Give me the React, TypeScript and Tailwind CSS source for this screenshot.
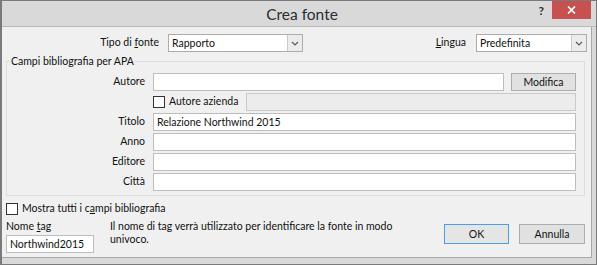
import React from "react";

const font = "font-['Lato',sans-serif]";

function Chevron() {
  return (
    <svg width="8" height="5" viewBox="0 0 8 5" className="block">
      <path d="M1 1 L4 4 L7 1" fill="none" stroke="#5a5a5a" strokeWidth="1.2" />
    </svg>
  );
}

function Select({ value, width }: { value: string; width: string }) {
  return (
    <div className={`${width} h-[18px] flex border border-[#acacac] bg-white`}>
      <div className="flex-1 pl-[3px] leading-[16px] text-[#111111]">{value}</div>
      <div className="w-[15px] border-l border-[#c8c8c8] bg-[#ececec] flex items-center justify-center">
        <Chevron />
      </div>
    </div>
  );
}

function Input({ value = "", className = "" }: { value?: string; className?: string }) {
  return (
    <div className={`h-[18px] border border-[#bdbdbd] bg-white pl-[3px] leading-[16px] text-[#111111] whitespace-nowrap ${className}`}>
      {value}
    </div>
  );
}

function Checkbox() {
  return <div className="w-[12px] h-[12px] border border-[#333333] bg-white shrink-0" />;
}

function Row({ label, children }: { label: string; children: React.ReactNode }) {
  return (
    <div className="flex items-center h-[18px]">
      <div className="w-[138px] text-right">{label}</div>
      <div className="flex-1 flex items-center ml-[8px]">{children}</div>
    </div>
  );
}

export default function App() {
  return (
    <div
      className={`${font} text-[10.5px] w-[597px] h-[265px] flex flex-col border-t border-r border-b border-l-2 border-[#7a7a7a] bg-[#d9d9d9] text-[#111111]`}
    >
      {/* Title bar */}
      <div className="h-[26px] shrink-0 flex items-center relative border-b border-[#b9b9b9] bg-[#d9d9d9]">
        <div className="flex-1 text-center text-[15.5px] text-[#2d2d2d] leading-[26px] pl-[6px]">Crea fonte</div>
        <div className="absolute right-[52px] top-[3px] text-[12px] leading-[14px] font-bold text-[#333]">?</div>
        <div className="absolute right-[5px] top-0 w-[39px] h-[18px] bg-[#c75050] flex items-center justify-center">
          <svg width="9" height="8" viewBox="0 0 9 8">
            <path d="M1 0.5 L8 7.5 M8 0.5 L1 7.5" stroke="white" strokeWidth="1.7" />
          </svg>
        </div>
      </div>

      {/* Body frame */}
      <div className="flex-1 flex flex-col pr-[4px] pb-[6px]">
        <div className="flex-1 flex flex-col bg-[#f0f0f0] border-r border-b border-[#a8a8a8]">
          {/* Row 1 */}
          <div className="mt-[7px] h-[18px] flex items-center">
            <div className="w-[157px] text-right">
              Tipo di <span className="underline">f</span>onte
            </div>
            <div className="ml-[9px]">
              <Select value="Rapporto" width="w-[135px]" />
            </div>
            <div className="ml-auto flex items-center mr-[4px]">
              <div>
                <span className="underline">L</span>ingua
              </div>
              <div className="ml-[10px]">
                <Select value="Predefinita" width="w-[111px]" />
              </div>
            </div>
          </div>

          {/* Group */}
          <fieldset className="mt-[2px] ml-[4px] mr-[6px] border border-[#dcdcdc] pr-[8px] pb-[4px] pt-[3px] flex flex-col gap-[2px]">
            <legend className="ml-[3px] px-[1px]">Campi bibliografia per APA</legend>
            <Row label="Autore">
              <Input className="w-[351px]" />
              <button className="ml-[7px] w-[65px] h-[18px] border border-[#adadad] bg-[#e1e1e1] leading-[16px]">
                Modifica
              </button>
            </Row>
            <div className="flex items-center h-[18px]">
              <div className="w-[146px]" />
              <Checkbox />
              <div className="ml-[4px] whitespace-nowrap">Autore azienda</div>
              <div className="ml-auto w-[330px] h-[18px] border border-[#c9c9c9] bg-[#ececec]" />
            </div>
            <Row label="Titolo">
              <Input className="flex-1" value="Relazione Northwind 2015" />
            </Row>
            <Row label="Anno">
              <Input className="flex-1" />
            </Row>
            <Row label="Editore">
              <Input className="flex-1" />
            </Row>
            <Row label="Città">
              <Input className="flex-1" />
            </Row>
          </fieldset>

          {/* Show all */}
          <div className="mt-[6px] ml-[4px] flex items-center h-[14px]">
            <Checkbox />
            <div className="ml-[4px] whitespace-nowrap">
              Mostra tutti i c<span className="underline">a</span>mpi bibliografia
            </div>
          </div>

          {/* Bottom */}
          <div className="mt-[2px] ml-[4px] mr-[6px] flex">
            <div className="flex flex-col">
              <div className="h-[16px] leading-[16px]">
                Nome <span className="underline">t</span>ag
              </div>
              <Input className="w-[88px] h-[16px] leading-[14px] mt-[1px]" value="Northwind2015" />
            </div>
            <div className="ml-[16px] w-[290px] leading-[13px] pt-[2px]">
              Il nome di tag verrà utilizzato per identificare la fonte in modo univoco.
            </div>
            <div className="ml-auto flex gap-[10px] pt-[6px]">
              <button className="w-[65px] h-[20px] border border-[#4d9ee8] bg-[#e5e5e5] leading-[18px]">OK</button>
              <button className="w-[66px] h-[20px] border border-[#adadad] bg-[#e1e1e1] leading-[18px]">Annulla</button>
            </div>
          </div>
        </div>
      </div>
    </div>
  );
}
